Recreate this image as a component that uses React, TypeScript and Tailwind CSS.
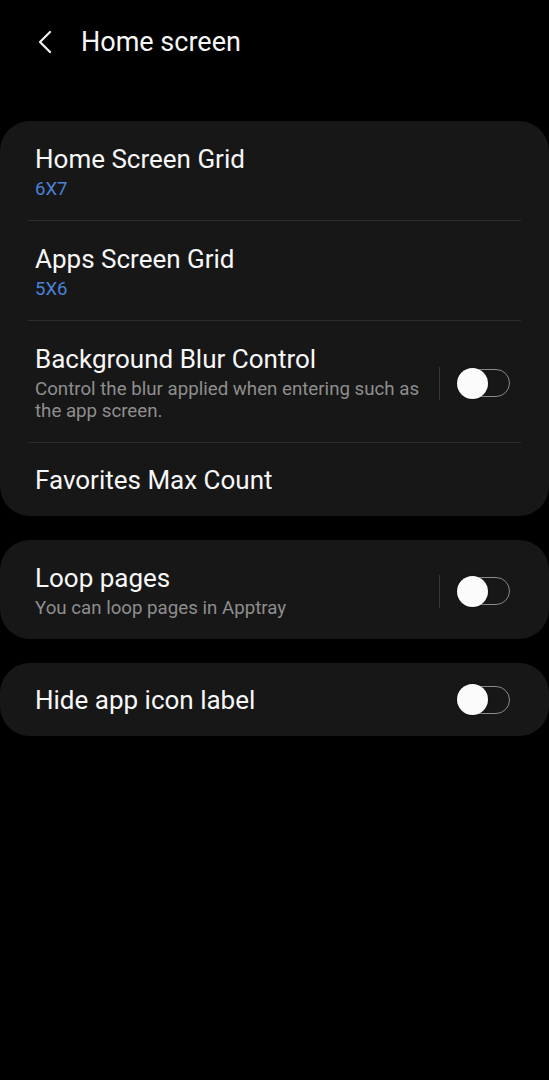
import React from "react";

type Row = {
  title: string;
  sub?: string;
  value?: string;
  toggle?: boolean;
};

const groups: Row[][] = [
  [
    { title: "Home Screen Grid", value: "6X7" },
    { title: "Apps Screen Grid", value: "5X6" },
    {
      title: "Background Blur Control",
      sub: "Control the blur applied when entering such as the app screen.",
      toggle: true,
    },
    { title: "Favorites Max Count" },
  ],
  [{ title: "Loop pages", sub: "You can loop pages in Apptray", toggle: true }],
  [{ title: "Hide app icon label", toggle: true }],
];

function Toggle() {
  return (
    <div className="relative h-[31px] w-[53px] shrink-0">
      <div className="absolute right-0 top-[1.5px] h-[28px] w-[50px] rounded-full border-[1.5px] border-[#8b8b8b]" />
      <div className="absolute left-0 top-0 h-[31px] w-[31px] rounded-full bg-[#fbfbfb] shadow-[0_0_2px_rgba(0,0,0,0.6)]" />
    </div>
  );
}

function SettingRow({ row, solo }: { row: Row; solo: boolean }) {
  const hasSecond = row.sub || row.value;
  return (
    <div
      className={`flex items-center pl-[35px] pr-[39px] ${
        hasSecond ? "pt-[23px] pb-[20px]" : "h-[73px]"
      }`}
    >
      <div className="min-w-0 flex-1 pr-[12px]">
        <div className="text-[26px] leading-[30px] text-[#f7f7f7]">{row.title}</div>
        {row.value && (
          <div className="mt-[4px] text-[18.5px] leading-[22px] text-[#4a81d6]">
            {row.value}
          </div>
        )}
        {row.sub && (
          <div className="mt-[4px] text-[18.7px] leading-[22px] text-[#8e8e8e]">
            {row.sub}
          </div>
        )}
      </div>
      {row.toggle && (
        <div className="flex items-center">
          {!solo && <div className="mr-[17px] h-[33px] w-px bg-[#363636]" />}
          <Toggle />
        </div>
      )}
    </div>
  );
}

export default function App() {
  return (
    <div
      className="min-h-screen bg-black pt-[25px] pb-10"
      style={{ fontFamily: "Roboto, 'Noto Sans', sans-serif" }}
    >
      <header className="flex h-[34px] items-center">
        <svg
          className="ml-[36px] h-[24px] w-[18px]"
          viewBox="0 0 18 24"
          fill="none"
          stroke="#f2f2f2"
          strokeWidth="2.2"
          strokeLinecap="round"
          strokeLinejoin="round"
        >
          <path d="M14 2 L4 12 L14 22" />
        </svg>
        <h1 className="ml-[27px] text-[27px] leading-[34px] text-[#f7f7f7]">Home screen</h1>
      </header>

      <div className="mt-[62px] flex flex-col gap-[24px]">
        {groups.map((g, gi) => (
          <div key={gi} className="rounded-[30px] bg-[#171717]">
            {g.map((row, ri) => (
              <React.Fragment key={row.title}>
                {ri > 0 && <div className="mx-[28px] h-px bg-[#2d2d2d]" />}
                <SettingRow row={row} solo={row.title === "Hide app icon label"} />
              </React.Fragment>
            ))}
          </div>
        ))}
      </div>
    </div>
  );
}
